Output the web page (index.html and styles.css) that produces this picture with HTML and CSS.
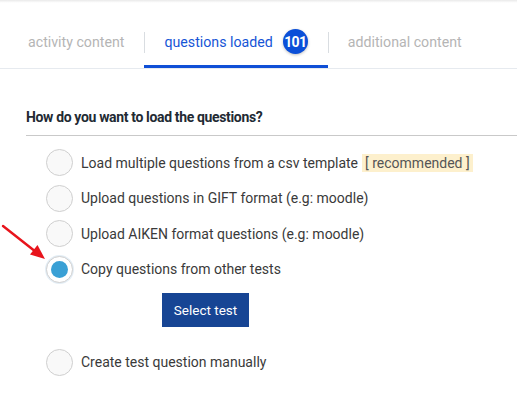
FILE: index.html
```html
<!DOCTYPE html>
<html>
<head>
<meta charset="utf-8">
<link rel="stylesheet" href="styles.css">
</head>
<body>
<div class="topbar"></div>
<nav class="tabs">
  <div class="tab">activity content</div>
  <div class="tab active sep">questions loaded <span class="badge">101</span></div>
  <div class="tab sep">additional content</div>
</nav>
<section class="panel">
  <h2 class="heading">How do you want to load the questions?</h2>
  <ul class="options">
    <li class="option"><span class="radio"></span><span class="label">Load multiple questions from a csv template</span><span class="tag">[ recommended ]</span></li>
    <li class="option"><span class="radio"></span><span class="label">Upload questions in GIFT format (e.g: moodle)</span></li>
    <li class="option"><span class="radio"></span><span class="label">Upload AIKEN format questions (e.g: moodle)</span></li>
    <li class="option"><span class="radio checked"></span><span class="label">Copy questions from other tests</span></li>
    <li class="action"><button class="btn">Select test</button></li>
    <li class="option last"><span class="radio"></span><span class="label">Create test question manually</span></li>
  </ul>
</section>
<svg class="arrow" width="60" height="60" viewBox="0 0 60 60">
  <line x1="3" y1="11" x2="36" y2="37" stroke="#e8141c" stroke-width="2.4" stroke-linecap="round"/>
  <polygon points="45,44 30,39.5 37.5,30" fill="#e8141c"/>
</svg>
</body>
</html>
```

FILE: styles.css
```css
html, body {
  margin: 0;
  padding: 0;
  background: #fff;
  font-family: Roboto, "Liberation Sans", sans-serif;
}
.topbar {
  height: 3px;
  background: linear-gradient(#e9e9e9, #fafafa 70%, #fff);
}
.tabs {
  display: flex;
  padding: 15px 0 0 8px;
  border-bottom: 1px solid #e6eaef;
}
.tab {
  position: relative;
  display: flex;
  align-items: center;
  height: 47px;
  padding: 0 20px;
  border-bottom: 3px solid transparent;
  font-size: 14.2px;
  color: #b5b5b5;
  white-space: nowrap;
}
.tab.sep::before {
  content: "";
  position: absolute;
  left: 0;
  top: 14px;
  height: 21px;
  width: 1px;
  background: #d9dde1;
}
.tab.active {
  color: #1655d6;
  border-bottom-color: #0f4fd6;
}
.badge {
  display: inline-flex;
  align-items: center;
  justify-content: center;
  width: 25px;
  height: 25px;
  margin-left: 10px;
  border-radius: 50%;
  background: #0b4fd8;
  color: #fff;
  font-weight: 700;
  font-size: 14px;
  letter-spacing: -0.6px;
  box-shadow: 0 1px 3px rgba(0,0,0,0.25);
}
.panel {
  padding: 38px 0 0 26px;
}
.heading {
  margin: 0;
  padding-bottom: 8px;
  font-size: 14px;
  line-height: 20px;
  font-weight: 700;
  letter-spacing: -0.35px;
  color: #222a33;
  border-bottom: 1px solid #c9c9c9;
}
.options {
  list-style: none;
  margin: 0;
  padding: 13px 0 0 20px;
}
.option {
  display: flex;
  align-items: center;
  height: 27px;
  margin-bottom: 8.5px;
}
.radio {
  flex: none;
  width: 25px;
  height: 25px;
  border: 1px solid #cfcfcf;
  border-radius: 50%;
  background: #f9f9f9;
  box-sizing: content-box;
  position: relative;
}
.radio.checked {
  background: #fff;
  box-shadow: 0 0 0 1px #e4eef6;
}
.radio.checked::after {
  content: "";
  position: absolute;
  left: 4px;
  top: 4px;
  width: 17px;
  height: 17px;
  border-radius: 50%;
  background: #3aa0d5;
}
.label {
  margin-left: 8px;
  font-size: 14px;
  color: #3a3a3a;
  white-space: nowrap;
}
.tag {
  margin-left: 4px;
  padding: 1px 3px;
  background: #fdf0cd;
  font-size: 14px;
  color: #555;
  white-space: nowrap;
}
.action {
  padding: 2px 0 0 116px;
  margin-bottom: 21.5px;
}
.btn {
  width: 87px;
  height: 34px;
  border: 0;
  background: #174594;
  color: #fff;
  font-family: Roboto, "Liberation Sans", sans-serif;
  font-size: 13.5px;
  padding: 0;
}
.arrow {
  position: absolute;
  left: 0;
  top: 215px;
}
```
